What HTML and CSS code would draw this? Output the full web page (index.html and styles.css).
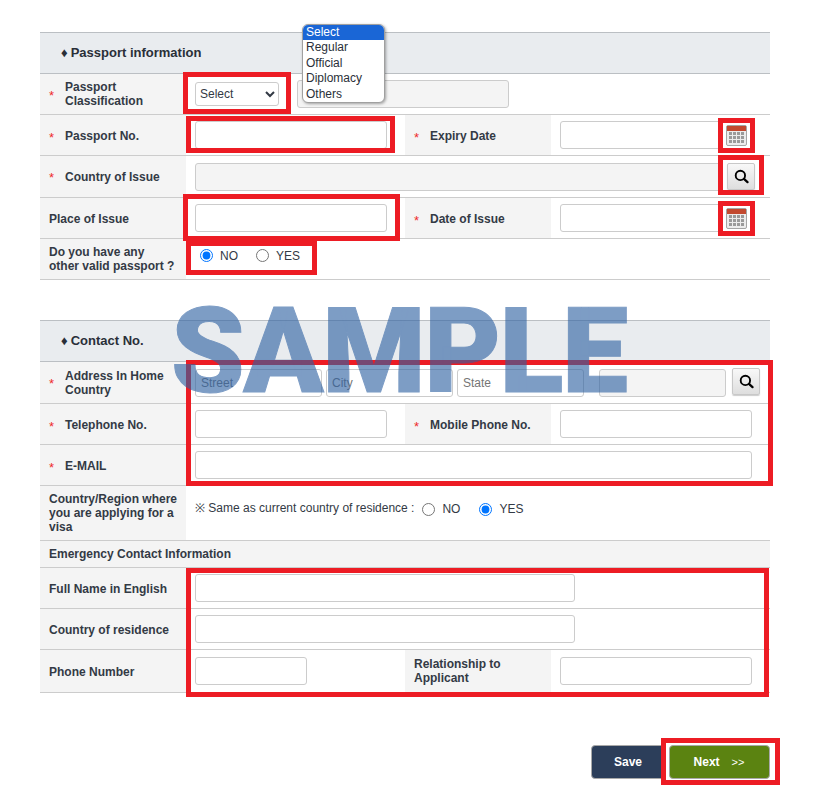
FILE: index.html
```html
<!DOCTYPE html>
<html lang="en">
<head>
    <meta charset="UTF-8">
    <meta name="viewport" content="width=device-width, initial-scale=1.0">
    <title>Passport and Contact Information</title>
    <link rel="stylesheet" href="styles.css">
</head>

<body>
    <div class="page">
        <table class="form-table">
            <colgroup>
                <col class="col-label"><col class="col-input"><col class="col-label"><col class="col-input">
            </colgroup>
            <tr class="section-row">
                <th colspan="4"><span class="diamond">♦</span>Passport information</th>
            </tr>
            <tr>
                <th><div class="req"><span class="star">*</span><span>Passport Classification</span></div></th>
                <td colspan="3">
                    <div class="field">
                        <select class="select-box"><option>Select</option></select>
                        <input type="text" class="input input-class" disabled>
                    </div>
                </td>
            </tr>
            <tr>
                <th class="nudge"><div class="req"><span class="star">*</span><span>Passport No.</span></div></th>
                <td><input type="text" class="input input-full"></td>
                <th class="nudge"><div class="req"><span class="star">*</span><span>Expiry Date</span></div></th>
                <td>
                    <div class="field">
                        <input type="text" class="input input-date">
                        <svg class="cal-icon" viewBox="0 0 21 21">
                            <rect x="0.5" y="0.5" width="20" height="20" rx="1.5" fill="#ececec" stroke="#a5a5a5"/>
                            <rect x="1" y="1" width="19" height="5" fill="#c2492f"/>
                            <path d="M3 7h3v3H3zM7 7h3v3H7zM11 7h3v3h-3zM15 7h3v3h-3zM3 11h3v3H3zM7 11h3v3H7zM11 11h3v3h-3zM15 11h3v3h-3zM3 15h3v3H3zM7 15h3v3H7zM11 15h3v3h-3zM15 15h3v3h-3z" fill="#9a9a9a"/>
                        </svg>
                    </div>
                </td>
            </tr>
            <tr class="row-42">
                <th><div class="req"><span class="star">*</span><span>Country of Issue</span></div></th>
                <td colspan="3">
                    <div class="field">
                        <input type="text" class="input input-country" disabled>
                        <button class="search-btn" type="button">
                            <svg viewBox="0 0 16 16" width="15" height="15"><circle cx="6.8" cy="6.8" r="5" fill="none" stroke="#000" stroke-width="2"/><path d="M10.6 10.6l3.8 3.4" stroke="#000" stroke-width="2.4" stroke-linecap="round"/></svg>
                        </button>
                    </div>
                </td>
            </tr>
            <tr>
                <th class="nudge">Place of Issue</th>
                <td><input type="text" class="input input-full"></td>
                <th class="nudge"><div class="req"><span class="star">*</span><span>Date of Issue</span></div></th>
                <td>
                    <div class="field">
                        <input type="text" class="input input-date">
                        <svg class="cal-icon" viewBox="0 0 21 21">
                            <rect x="0.5" y="0.5" width="20" height="20" rx="1.5" fill="#ececec" stroke="#a5a5a5"/>
                            <rect x="1" y="1" width="19" height="5" fill="#c2492f"/>
                            <path d="M3 7h3v3H3zM7 7h3v3H7zM11 7h3v3h-3zM15 7h3v3h-3zM3 11h3v3H3zM7 11h3v3H7zM11 11h3v3h-3zM15 11h3v3h-3zM3 15h3v3H3zM7 15h3v3H7zM11 15h3v3h-3zM15 15h3v3h-3z" fill="#9a9a9a"/>
                        </svg>
                    </div>
                </td>
            </tr>
            <tr>
                <th>Do you have any<br>other valid passport ?</th>
                <td colspan="3" class="other-passport-cell">
                    <div class="radio-group">
                        <label class="radio"><input type="radio" name="other_passport" checked>NO</label>
                        <label class="radio"><input type="radio" name="other_passport">YES</label>
                    </div>
                </td>
            </tr>
        </table>

        <table class="form-table second-table">
            <colgroup>
                <col class="col-label"><col class="col-input"><col class="col-label"><col class="col-input">
            </colgroup>
            <tr class="section-row">
                <th colspan="4"><span class="diamond">♦</span>Contact No.</th>
            </tr>
            <tr class="row-42">
                <th><div class="req"><span class="star">*</span><span>Address In Home Country</span></div></th>
                <td colspan="3" class="address-cell">
                    <div class="field address-field">
                        <input type="text" class="input input-addr" placeholder="Street">
                        <input type="text" class="input input-addr" placeholder="City">
                        <input type="text" class="input input-addr" placeholder="State">
                        <input type="text" class="input input-addr input-zip" disabled>
                        <button class="search-btn" type="button">
                            <svg viewBox="0 0 16 16" width="15" height="15"><circle cx="6.8" cy="6.8" r="5" fill="none" stroke="#000" stroke-width="2"/><path d="M10.6 10.6l3.8 3.4" stroke="#000" stroke-width="2.4" stroke-linecap="round"/></svg>
                        </button>
                    </div>
                </td>
            </tr>
            <tr>
                <th class="nudge"><div class="req"><span class="star">*</span><span>Telephone No.</span></div></th>
                <td><input type="text" class="input input-full"></td>
                <th class="nudge"><div class="req"><span class="star">*</span><span>Mobile Phone No.</span></div></th>
                <td><input type="text" class="input input-full"></td>
            </tr>
            <tr>
                <th class="nudge"><div class="req"><span class="star">*</span><span>E-MAIL</span></div></th>
                <td colspan="3"><input type="text" class="input input-email"></td>
            </tr>
            <tr>
                <th>Country/Region where you are applying for a visa</th>
                <td colspan="3" class="residence-cell">
                    <div class="radio-group">
                        <span class="note">※ Same as current country of residence :</span>
                        <label class="radio"><input type="radio" name="same_country">NO</label>
                        <label class="radio"><input type="radio" name="same_country" checked>YES</label>
                    </div>
                </td>
            </tr>
            <tr class="subhead-row">
                <th colspan="4">Emergency Contact Information</th>
            </tr>
            <tr>
                <th class="nudge">Full Name in English</th>
                <td colspan="3"><input type="text" class="input input-wide"></td>
            </tr>
            <tr>
                <th class="nudge">Country of residence</th>
                <td colspan="3"><input type="text" class="input input-wide"></td>
            </tr>
            <tr class="row-43">
                <th class="nudge">Phone Number</th>
                <td><input type="text" class="input input-phone"></td>
                <th>Relationship to Applicant</th>
                <td><input type="text" class="input input-full"></td>
            </tr>
        </table>

        <div class="button-row">
            <button class="btn btn-save" type="button">Save</button>
            <button class="btn btn-next" type="button">Next<span class="arrows">&gt;&gt;</span></button>
        </div>

        <!-- opened dropdown of the classification select -->
        <ul class="dropdown">
            <li class="selected">Select</li>
            <li>Regular</li>
            <li>Official</li>
            <li>Diplomacy</li>
            <li>Others</li>
        </ul>

        <!-- red annotation boxes -->
        <div class="frame frame-select"></div>
        <div class="frame frame-passport"></div>
        <div class="frame frame-place"></div>
        <div class="frame frame-radio"></div>
        <div class="frame frame-cal1"></div>
        <div class="frame frame-search"></div>
        <div class="frame frame-cal2"></div>
        <div class="frame frame-contact"></div>
        <div class="frame frame-emergency"></div>
        <div class="frame frame-next"></div>

        <div class="watermark">SAMPLE</div>
    </div>
</body>
</html>
```

FILE: styles.css
```css
:root {
    --text-color: #333a45;
    --line-color: #cccccc;
    --label-bg: #f4f4f4;
    --frame-color: #ed1c24;
}

* {
    box-sizing: border-box;
}

body {
    margin: 0;
    font-family: "Liberation Sans", Arial, sans-serif;
    font-size: 12px;
    color: var(--text-color);
    background-color: white;
}

.page {
    position: relative;
    width: 822px;
    height: 794px;
    padding: 32px 52px 0 40px;
    overflow: hidden;
}

.form-table {
    width: 730px;
    table-layout: fixed;
    border-collapse: collapse;
}

.second-table {
    margin-top: 40px;
}

.col-label {
    width: 146px;
}

.col-input {
    width: 219px;
}

.form-table tr {
    height: 41px;
}

.form-table tr.row-42 {
    height: 42px;
}

.form-table tr.row-43 {
    height: 43px;
}

.form-table th,
.form-table td {
    padding: 6px 9px;
    border-bottom: 1px solid var(--line-color);
    vertical-align: middle;
    text-align: left;
    line-height: 14px;
}

.form-table th {
    background-color: var(--label-bg);
    font-weight: bold;
}

.form-table td {
    padding-right: 0;
}

/* single line labels sit a pixel under the row's centre */
.form-table th.nudge {
    padding-top: 8px;
    padding-bottom: 6px;
}

.section-row th {
    padding-left: 21px;
    background-color: #e9ecef;
    border-top: 1px solid #bbbfc3;
    border-bottom-color: #bbbfc3;
    font-size: 13px;
    color: #2a2f38;
}

.diamond {
    margin-right: 3px;
    font-size: 13px;
}

.subhead-row {
    border-top: 1px solid var(--line-color);
}

.form-table tr.subhead-row {
    height: 27px;
}

.subhead-row th {
    padding-top: 0;
    padding-bottom: 0;
}

.req {
    display: flex;
    align-items: center;
}

.star {
    flex: 0 0 16px;
    color: #ee2a2a;
    font-size: 13px;
    font-weight: normal;
    line-height: 14px;
    padding-top: 3px;
}

.field {
    display: flex;
    align-items: center;
}

.input {
    display: block;
    height: 28px;
    padding: 0 5px;
    border: 1px solid var(--line-color);
    border-radius: 3px;
    background-color: white;
    font-family: inherit;
    font-size: 12px;
}

.input::placeholder {
    color: #757575;
}

.input:disabled {
    background-color: #f4f4f4;
}

.input-full {
    width: 192px;
}

.input-date {
    width: 161px;
}

.input-class {
    width: 212px;
    margin-left: 18px;
}

.input-country {
    width: 528px;
}

.input-addr {
    width: 127px;
    margin-right: 4px;
}

.input-zip {
    margin-left: 11px;
    margin-right: 5px;
}

.input-email {
    width: 557px;
}

.input-wide {
    width: 380px;
}

.input-phone {
    width: 112px;
}

.select-box {
    width: 84px;
    height: 24px;
    padding-left: 0;
    border: 1px solid var(--line-color);
    border-radius: 3px;
    background-color: white;
    font-family: inherit;
    font-size: 12px;
    color: var(--text-color);
}

.cal-icon {
    width: 21px;
    height: 21px;
    margin-left: 5px;
    flex: none;
}

.search-btn {
    display: flex;
    align-items: center;
    justify-content: center;
    align-self: flex-start;
    width: 28px;
    height: 27px;
    margin-left: 4px;
    padding: 0;
    flex: none;
    border: 1px solid #c8c8c8;
    border-radius: 2px;
    background: linear-gradient(#f8f8f8, #dedede);
    box-shadow: 0 1px 1px rgba(0, 0, 0, 0.2);
}

.form-table td.address-cell {
    padding-top: 7px;
    padding-bottom: 6px;
}

.address-field .search-btn {
    margin-top: -1px;
    margin-left: 1px;
}

.radio-group {
    display: flex;
    align-items: center;
}

.radio {
    display: flex;
    align-items: center;
    margin-right: 14px;
    font-weight: normal;
}

.radio input {
    width: 13px;
    height: 13px;
    margin: 0 7px 0 5px;
}

.form-table td.other-passport-cell {
    padding-bottom: 13px;
}

.other-passport-cell .radio {
    margin-right: 13px;
}

.form-table td.residence-cell {
    padding-bottom: 14px;
}

.note {
    margin-top: -2px;
    margin-right: 3px;
}

.button-row {
    display: flex;
    justify-content: flex-end;
    gap: 4px;
    margin-top: 52px;
}

.btn {
    height: 34px;
    border: 1px solid #a9a9a9;
    border-radius: 4px;
    color: white;
    font-family: inherit;
    font-size: 12px;
    font-weight: bold;
}

.btn-save {
    width: 74px;
    background-color: #2c3e5a;
}

.btn-next {
    width: 101px;
    padding-right: 7px;
    background-color: #5b8311;
}

.arrows {
    margin-left: 12px;
    font-size: 11px;
    font-weight: normal;
}

/* things that lie over the form */
.dropdown {
    position: absolute;
    left: 302px;
    top: 24px;
    width: 83px;
    height: 79px;
    margin: 0;
    padding: 0;
    list-style: none;
    overflow: hidden;
    background-color: white;
    border: 1px solid #a0a0a0;
    border-radius: 6px;
    box-shadow: 1px 1px 3px rgba(0, 0, 0, 0.35);
    line-height: 15.5px;
    color: #2a2f38;
}

.dropdown li {
    padding-left: 3px;
}

.dropdown .selected {
    height: 15px;
    background-color: #1a66d6;
    color: white;
}

.frame {
    position: absolute;
    border: 5px solid var(--frame-color);
}

.frame-select { left: 183px; top: 72px; width: 108px; height: 42px; }
.frame-passport { left: 186px; top: 116px; width: 209px; height: 37px; }
.frame-place { left: 183px; top: 194px; width: 217px; height: 47px; }
.frame-radio { left: 186px; top: 241px; width: 131px; height: 34px; }
.frame-cal1 { left: 718px; top: 118px; width: 37px; height: 35px; }
.frame-search { left: 718px; top: 155px; width: 46px; height: 40px; }
.frame-cal2 { left: 718px; top: 201px; width: 37px; height: 35px; }
.frame-contact { left: 186px; top: 360px; width: 587px; height: 126px; }
.frame-emergency { left: 186px; top: 568px; width: 583px; height: 129px; }
.frame-next { left: 661px; top: 738px; width: 119px; height: 47px; }

.watermark {
    position: absolute;
    left: 171px;
    top: 302px;
    font-family: Roboto, sans-serif;
    font-size: 118px;
    font-weight: 900;
    line-height: 100px;
    letter-spacing: -1.5px;
    color: #2f62a3;
    -webkit-text-stroke: 1px #2f62a3;
    opacity: 0.62;
}
```
